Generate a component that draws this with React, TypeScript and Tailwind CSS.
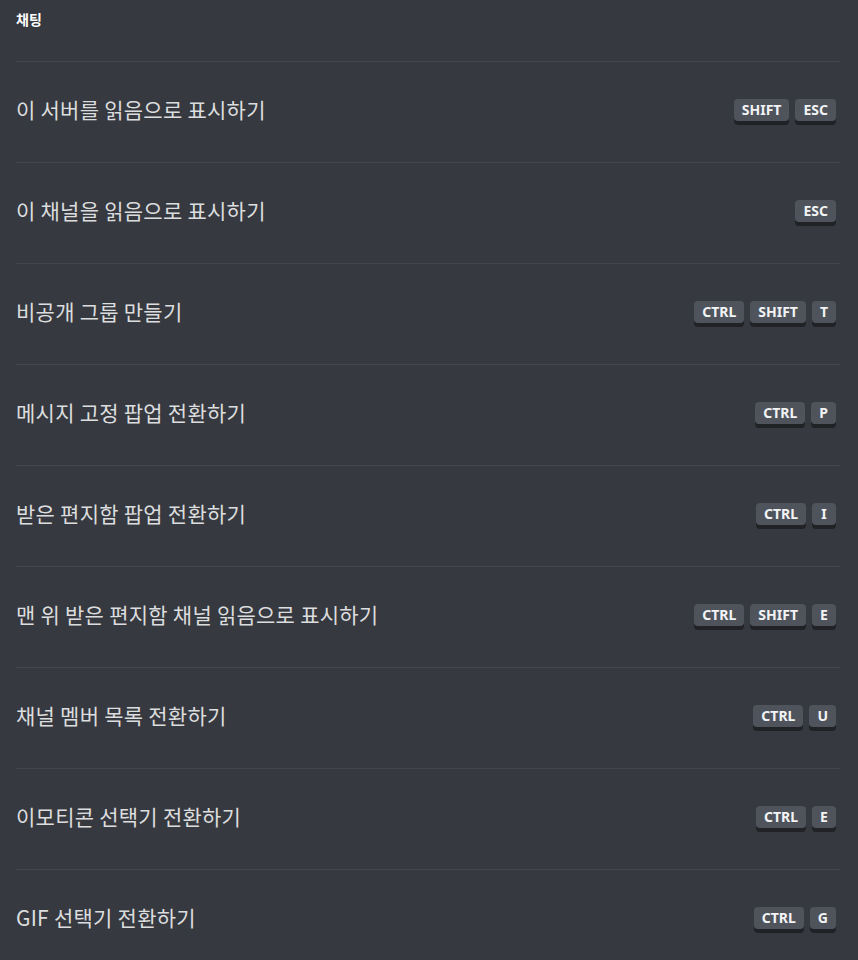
const rows: { label: string; keys: string[] }[] = [
  { label: "이 서버를 읽음으로 표시하기", keys: ["SHIFT", "ESC"] },
  { label: "이 채널을 읽음으로 표시하기", keys: ["ESC"] },
  { label: "비공개 그룹 만들기", keys: ["CTRL", "SHIFT", "T"] },
  { label: "메시지 고정 팝업 전환하기", keys: ["CTRL", "P"] },
  { label: "받은 편지함 팝업 전환하기", keys: ["CTRL", "I"] },
  { label: "맨 위 받은 편지함 채널 읽음으로 표시하기", keys: ["CTRL", "SHIFT", "E"] },
  { label: "채널 멤버 목록 전환하기", keys: ["CTRL", "U"] },
  { label: "이모티콘 선택기 전환하기", keys: ["CTRL", "E"] },
  { label: "GIF 선택기 전환하기", keys: ["CTRL", "G"] },
];

function Key({ k }: { k: string }) {
  return (
    <span className="inline-flex h-[22px] min-w-[24px] items-center justify-center rounded-[4px] bg-[#4f545c] px-[8px] font-['Noto_Sans',sans-serif] text-[14px] font-bold leading-none text-[#f2f3f5] shadow-[0_4px_0_#202225]">
      {k}
    </span>
  );
}

export default function App() {
  return (
    <div className="min-h-screen bg-[#36393f] pl-4 pr-[18px] font-['Noto_Sans_CJK_KR','Noto_Sans',sans-serif]">
      <div className="h-[62px] border-b border-[#42454b] pt-[9px]">
        <h2 className="text-[14px] font-bold leading-[20px] text-white">채팅</h2>
      </div>
      {rows.map((r) => (
        <div
          key={r.label}
          className="flex h-[101px] items-center justify-between border-b border-[#42454b] pb-[2px] pr-1"
        >
          <span className="mb-[4px] text-[21px] leading-[24px] tracking-[0.25px] text-[#dcddde]">{r.label}</span>
          <div className="flex gap-[6px] pb-[2px]">
            {r.keys.map((k) => (
              <Key key={k} k={k} />
            ))}
          </div>
        </div>
      ))}
    </div>
  );
}
